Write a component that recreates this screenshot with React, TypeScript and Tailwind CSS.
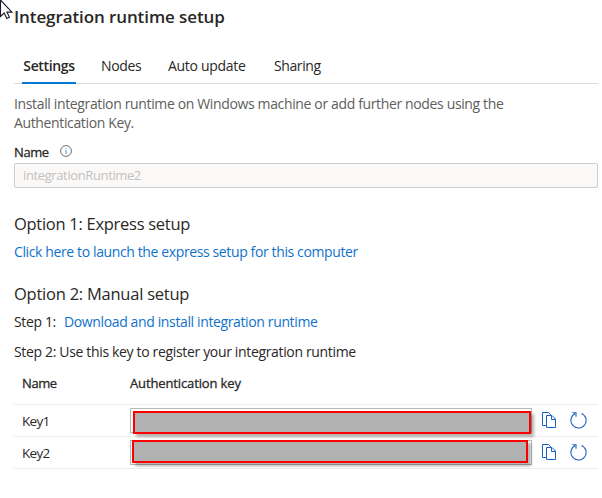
import React from 'react';

const tabs = [
  { label: 'Nodes', cls: 'ml-[25px] w-[67px] tracking-[-0.35px]' },
  { label: 'Auto update', cls: 'w-[106px] tracking-[-0.3px]' },
  { label: 'Sharing', cls: 'tracking-[-0.4px]' },
];

function InfoIcon() {
  return (
    <svg className="absolute left-[46px] top-[3px]" width="12" height="12" viewBox="0 0 12 12" fill="none" stroke="#605e5c">
      <circle cx="6" cy="6" r="5.4" strokeWidth="0.9" />
      <path d="M6 5v4M6 3v1" stroke="#4a90c8" />
    </svg>
  );
}

function CopyIcon() {
  return (
    <svg width="15" height="17" viewBox="0 0 15 17" fill="none" stroke="#1b62c0" strokeWidth="1">
      <path d="M4.500 13.500h-4V.5h6l3 3" />
      <path d="M4.500 3.500h5.500l3.500 3.500v8.500h-9z" fill="#fff" />
      <path d="M9.500 3.500v4h4" />
    </svg>
  );
}

function RefreshIcon() {
  return (
    <svg width="17" height="17" viewBox="0 0 17 17" fill="none" stroke="#1b62c0" strokeWidth="1.1">
      <path d="M11.500 1.400A7.600 7.600 0 1 1 5.300 1.500" />
      <path d="M2.300 .8h3.700v4" />
    </svg>
  );
}

function KeyRow({ name, mask }: { name: string; mask: string }) {
  return (
    <div className="flex h-8 border-b border-[#efeeed]">
      <div className="w-[116px] pl-2 pt-[2px] text-[13.500px] leading-[29px] tracking-[-0.7px]">{name}</div>
      <div className="relative mt-[3px] h-[25px] w-[402px] border border-[#b8b8b8]">
        <div className={'absolute border-2 border-[#fc0000] bg-[#b1b1b1] shadow-[3px_3px_3px_rgba(0,0,0,0.3)] ' + mask} />
      </div>
      <div className="ml-[10px] mt-[7px]"><CopyIcon /></div>
      <div className="ml-[13px] mt-[7px]"><RefreshIcon /></div>
    </div>
  );
}

export default function App() {
  return (
    <div className="relative h-[498px] w-[602px] overflow-hidden whitespace-nowrap bg-white pl-[14px] pr-1 font-['Open_Sans','Noto_Sans',sans-serif] text-[14px] text-[#292827]">
      <svg className="absolute left-0 top-0" width="13" height="20" viewBox="0 0 13 20" fill="#fff" stroke="#1c1c28" strokeWidth="1.1">
        <path d="M.5 0v16.500l3.700-3.500 2.600 5.500 2.600-1.200-2.500-5.200h5z" />
      </svg>
      <h1 className="h-[50px] pt-[5px] text-[17px] font-semibold leading-6 tracking-[-0.1px]">Integration runtime setup</h1>
      <div className="flex h-[34px] border-b border-[#dddcdb] pl-2 leading-[32px]">
        <div className="h-[34px] w-[54px] border-b-2 border-[#0078d4] text-center font-semibold tracking-[-0.35px]">Settings</div>
        {tabs.map((t) => <div key={t.label} className={t.cls}>{t.label}</div>)}
      </div>
      <p className="h-[58px] pt-[10px] leading-[19px] tracking-[-0.36px] text-[#605e5c]">Install integration runtime on Windows machine or add further nodes using the<br />Authentication Key.</p>
      <div className="relative h-[21px] text-[13px] leading-5 tracking-[-0.4px]"><span className="[-webkit-text-stroke:0.3px]">Name</span><InfoIcon /></div>
      <div className="h-[25px] rounded-[2px] border border-[#cfcecd] bg-[#faf9f8] pl-2 text-[13px] leading-[23px] tracking-[-0.38px] text-[#c3c1bf]">integrationRuntime2</div>
      <h2 className="mt-[24px] h-6 text-[16.500px] leading-6 tracking-[-0.28px]">Option 1: Express setup</h2>
      <div className="mt-[6px] h-5 leading-5 tracking-[-0.38px] text-[#0f72cb]">Click here to launch the express setup for this computer</div>
      <h2 className="mt-[20px] h-6 text-[16.500px] leading-6 tracking-[-0.24px]">Option 2: Manual setup</h2>
      <div className="mt-[6px] flex h-5 leading-5 tracking-[-0.37px]"><span className="w-[50px]">Step 1:</span><span className="text-[#0f72cb]">Download and install integration runtime</span></div>
      <div className="mt-[10px] h-5 leading-5 tracking-[-0.34px]">Step 2: Use this key to register your integration runtime</div>
      <div className="mt-[2px] flex h-[41px] border-b border-[#efeeed] pl-2 text-[13px] leading-[38px] tracking-[-0.13px] [-webkit-text-stroke:0.3px]"><span className="w-[108px] tracking-[-0.4px]">Name</span><span>Authentication key</span></div>
      <KeyRow name="Key1" mask="left-[2px] top-[2px] h-[23px] w-[398px]" />
      <KeyRow name="Key2" mask="left-[1px] top-[-1px] h-[23px] w-[396px]" />
    </div>
  );
}
